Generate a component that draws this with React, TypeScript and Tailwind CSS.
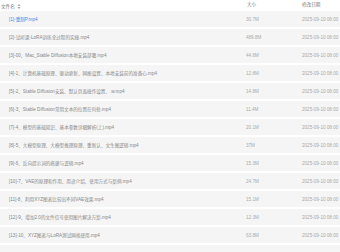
import React from 'react';

type FileRow = { name: string; size: string; date: string };

const files: FileRow[] = [
  { name: '[1]-重制P.mp4', size: '30.7M', date: '2025-09-10 08:00' },
  { name: '[2]-试听课-LoRA训练全过程的实操.mp4', size: '489.8M', date: '2025-09-10 08:00' },
  { name: '[3]-00、Mac_Stable Diffusion本地安装部署.mp4', size: '44.8M', date: '2025-09-10 08:00' },
  { name: '[4]-1、计算机基础原理、驱动更新、网络设置、本地安装前的准备心.mp4', size: '12.8M', date: '2025-09-10 08:00' },
  { name: '[5]-2、Stable Diffusion安装、默认页面操作设置、.w.mp4', size: '14.8M', date: '2025-09-10 08:00' },
  { name: '[6]-3、Stable Diffusion常用文本的位置在何处.mp4', size: '11.4M', date: '2025-09-10 08:00' },
  { name: '[7]-4、模型的基础知识、基本参数详细解析(上).mp4', size: '20.1M', date: '2025-09-10 08:00' },
  { name: '[8]-5、大模型原理、大模型推理原理、重新认、文生图逻辑.mp4', size: '37M', date: '2025-09-10 08:00' },
  { name: '[9]-6、反向提示词的搭建与逻辑.mp4', size: '15.3M', date: '2025-09-10 08:00' },
  { name: '[10]-7、VAE的原理和作用、用途介绍、使用方式与案例.mp4', size: '24.7M', date: '2025-09-10 08:00' },
  { name: '[11]-8、利用XYZ图表比较出不同VAE效果.mp4', size: '15.1M', date: '2025-09-10 08:00' },
  { name: '[12]-9、增加2.0的文件信号使用图片解决方案.mp4', size: '12.3M', date: '2025-09-10 08:00' },
  { name: '[13]-10、XYZ图表与LoRA测试网格使用.mp4', size: '63.8M', date: '2025-09-10 08:00' },
];

const SortIcon = () => (
  <svg width="4" height="5" viewBox="0 0 4 5" className="ml-[2px]">
    <path d="M2 0 L3.6 2 H0.4 Z" fill="#aaa" />
    <path d="M2 5 L3.6 3 H0.4 Z" fill="#aaa" />
  </svg>
);

const App = () => {
  return (
    <div
      className="w-[340px] h-[252px] overflow-hidden bg-white text-[4.6px] leading-[5px]"
      style={{ fontFamily: '"Liberation Sans", "Noto Sans CJK SC", sans-serif' }}
    >
      <div className="grid grid-cols-[246px_56px_1fr] h-[11px] pt-[1.5px] text-[#777]">
        <div className="flex items-center pl-[1px]">
          文件名
          <SortIcon />
        </div>
        <div className="pl-[1px]">大小</div>
        <div>修改日期</div>
      </div>
      {files.map((f, i) => (
        <div
          key={f.name}
          className="grid grid-cols-[246px_56px_1fr] items-center h-[16px] mb-[2px] bg-[#f5f5f5]"
        >
          <div className={`pl-[9px] whitespace-nowrap ${i === 0 ? 'text-[#4a85e6]' : 'text-[#888]'}`}>
            {f.name}
          </div>
          <div className="text-[#aaa]">{f.size}</div>
          <div className="text-[#aaa] whitespace-nowrap">{f.date}</div>
        </div>
      ))}
      <div className="h-[16px] bg-[#f5f5f5]" />
    </div>
  );
};

export default App;
